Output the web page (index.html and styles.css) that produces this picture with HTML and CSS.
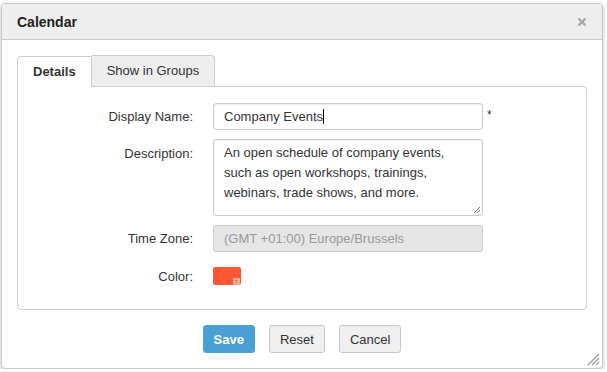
FILE: index.html
```html
<!DOCTYPE html>
<html lang="en">
<head>
  <meta charset="UTF-8" />
  <title>Calendar</title>
  <link rel="stylesheet" href="styles.css">
</head>
<body>

  <div class="dialog">

    <!-- Cabeçalho -->
    <div class="dialog-header">
      <span class="dialog-title">Calendar</span>
      <svg class="dialog-close" width="10" height="10" viewBox="0 0 10 10">
        <path d="M1.5 1.5 L8.5 8.5 M8.5 1.5 L1.5 8.5" stroke="#a8a8a8" stroke-width="2.4" />
      </svg>
    </div>

    <div class="dialog-body">
      <div class="tabs">
        <div class="tab active">Details</div>
        <div class="tab">Show in Groups</div>
      </div>

      <div class="panel">
        <div class="row">
          <label class="label">Display Name:</label>
          <div class="field">
            <div class="input">Company Events<span class="caret"></span></div>
            <span class="required">*</span>
          </div>
        </div>

        <div class="row row-top">
          <label class="label">Description:</label>
          <div class="field">
            <div class="input textarea">An open schedule of company events, such as open workshops, trainings, webinars, trade shows, and more.
              <svg class="grip-small" width="9" height="9" viewBox="0 0 9 9">
                <path d="M8 2 L2 8 M8 5 L5 8" stroke="#777" stroke-width="1" />
              </svg>
            </div>
          </div>
        </div>

        <div class="row">
          <label class="label">Time Zone:</label>
          <div class="field">
            <div class="input disabled">(GMT +01:00) Europe/Brussels</div>
          </div>
        </div>

        <div class="row">
          <label class="label">Color:</label>
          <div class="field">
            <div class="swatch"><span class="swatch-arrow"></span></div>
          </div>
        </div>
      </div>

      <div class="buttons">
        <button class="btn btn-primary">Save</button>
        <button class="btn">Reset</button>
        <button class="btn">Cancel</button>
      </div>
    </div>

    <svg class="grip" width="14" height="14" viewBox="0 0 14 14">
      <path d="M13 2 L2 13 M13 6 L6 13 M13 10 L10 13" stroke="#999" stroke-width="1.2" />
    </svg>
  </div>

</body>
</html>
```

FILE: styles.css
```css
/* Reset básico */
* {
  margin: 0;
  padding: 0;
  box-sizing: border-box;
}
body {
  font-family: "Liberation Sans", Arial, sans-serif;
  font-size: 13px;
  color: #333;
  background: #fff;
  padding: 3px 0 0 1px;
}

/* Janela do diálogo */
.dialog {
  position: relative;
  width: 602px;
  height: 366px;
  background: #fff;
  border: 1px solid #c8c8c8;
  border-radius: 4px;
  box-shadow: 0 2px 4px rgba(0, 0, 0, 0.25);
}
.dialog-header {
  height: 36px;
  background: #eee;
  border-bottom: 1px solid #c8c8c8;
  border-radius: 4px 4px 0 0;
  display: flex;
  align-items: center;
  justify-content: space-between;
  padding: 0 15px 0 15px;
}
.dialog-title {
  font-size: 14px;
  font-weight: bold;
  color: #222;
}

.dialog-body {
  padding: 15px 15px 0 15px;
}

/* --- Abas --- */
.tabs {
  display: flex;
  height: 31px;
}
.tab {
  padding: 0 15px;
  line-height: 30px;
  white-space: nowrap;
  background: #eee;
  border: 1px solid #ccc;
  border-bottom: none;
  border-radius: 0 4px 0 0;
  color: #333;
}
.tab + .tab {
  border-left: none;
}
.tab.active {
  background: #fff;
  font-weight: bold;
  border-radius: 4px 0 0 0;
  position: relative;
  top: 1px;
  height: 31px;
  padding: 0 15px;
}

.panel {
  width: 570px;
  border: 1px solid #ccc;
  border-radius: 0 4px 4px 4px;
  padding: 16px 0 24px 0;
  display: flex;
  flex-direction: column;
  gap: 9px;
}

/* --- Linhas do formulário --- */
.row {
  display: flex;
  align-items: center;
}
.row-top {
  align-items: flex-start;
}
.row-top .label {
  padding-top: 7px;
}
.row:last-child {
  margin-top: 6px;
}
.label {
  width: 175px;
  text-align: right;
  color: #333;
}
.field {
  margin-left: 20px;
  display: flex;
  align-items: flex-start;
}
.input {
  position: relative;
  width: 270px;
  height: 27px;
  border: 1px solid #ccc;
  border-radius: 3px;
  padding: 0 10px;
  line-height: 25px;
  color: #333;
  background: #fff;
  box-shadow: inset 0 1px 2px rgba(0, 0, 0, 0.08);
}
.caret {
  display: inline-block;
  width: 1px;
  height: 15px;
  background: #000;
  vertical-align: -3px;
}
.required {
  margin-left: 4px;
  margin-top: 5px;
  font-size: 12px;
  color: #333;
}
.textarea {
  height: 77px;
  line-height: 20px;
  padding-top: 3px;
  padding-right: 12px;
}
.grip-small {
  position: absolute;
  right: 1px;
  bottom: 1px;
}
.disabled {
  background: #e6e6e6;
  color: #999;
  box-shadow: none;
}

/* --- Cor --- */
.swatch {
  position: relative;
  width: 28px;
  height: 18px;
  background: #ff5733;
  border-radius: 2px;
}
.swatch-arrow {
  position: absolute;
  right: 1px;
  bottom: 0;
  width: 7px;
  height: 7px;
  background: #ffa590;
}
.swatch-arrow::after {
  content: "";
  position: absolute;
  left: 1px;
  top: 2px;
  border-left: 2.5px solid transparent;
  border-right: 2.5px solid transparent;
  border-top: 3px solid #a0a0a0;
}

/* Botões */
.buttons {
  display: flex;
  justify-content: center;
  gap: 14px;
  margin-top: 15px;
}
.btn {
  height: 28px;
  padding: 0 10px;
  font-family: "Liberation Sans", Arial, sans-serif;
  font-size: 13px;
  color: #333;
  background: #f0f0f0;
  border: 1px solid #c6c6c6;
  border-radius: 3px;
}
.btn-primary {
  background: #4a9fd5;
  border-color: #4a9fd5;
  color: #fff;
  font-weight: bold;
}

.grip {
  position: absolute;
  right: 2px;
  bottom: 2px;
}
```
